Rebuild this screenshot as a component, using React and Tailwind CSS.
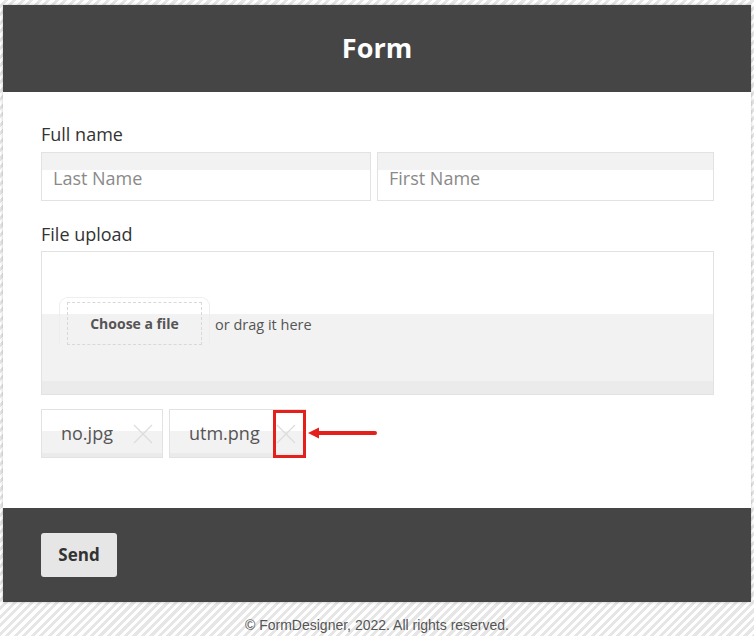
import React from "react";

const TagX = () => (
  <svg width="20" height="20" viewBox="0 0 20 20" className="shrink-0">
    <path d="M1 1 L19 19 M19 1 L1 19" stroke="#dcdcdc" strokeWidth="1.2" fill="none" />
  </svg>
);

const FileTag = ({ name, width }) => (
  <div
    className={`${width} h-[49px] flex items-center justify-between pl-[19px] pr-[9px] border border-[#e2e2e2] bg-[linear-gradient(#fff_0,#fff_21px,#f2f2f2_21px,#f2f2f2_43px,#ebebeb_43px)]`}
  >
    <span className="text-[18px] text-[#555]">{name}</span>
    <TagX />
  </div>
);

const App = () => {
  return (
    <div className="min-h-[636px] bg-[repeating-linear-gradient(135deg,#fff_0,#fff_3px,#e6e6e6_3px,#e6e6e6_6px)] pt-[5px] px-[3px] font-['Open_Sans',sans-serif]">
      <div className="bg-white shadow-[0_0_3px_rgba(0,0,0,0.25)]">
        <div className="h-[87px] bg-[#454545] flex items-center justify-center">
          <h1 className="text-[27px] font-bold text-white">Form</h1>
        </div>

        <div className="px-[38px] pt-[30px] pb-[50px]">
          <p className="text-[18px] leading-[24px] text-[#333]">Full name</p>
          <div className="mt-[6px] grid grid-cols-[330px_1fr] gap-[6px] mr-[-1px]">
            <input
              type="text"
              placeholder="Last Name"
              className="h-[49px] px-[11px] pt-[3px] border border-[#e2e2e2] text-[18px] text-[#555] placeholder:text-[#8a8a8a] outline-none bg-[linear-gradient(#f2f2f2_0,#f2f2f2_17px,#fff_17px)]"
            />
            <input
              type="text"
              placeholder="First Name"
              className="h-[49px] px-[11px] pt-[3px] border border-[#e2e2e2] text-[18px] text-[#555] placeholder:text-[#8a8a8a] outline-none bg-[linear-gradient(#f2f2f2_0,#f2f2f2_17px,#fff_17px)]"
            />
          </div>

          <p className="mt-[21px] text-[18px] leading-[24px] text-[#333]">File upload</p>
          <div className="mt-[5px] h-[144px] mr-[-1px] border border-[#e2e2e2] bg-[linear-gradient(#fff_0,#fff_62px,#f2f2f2_62px,#f2f2f2_129px,#ebebeb_129px)] pt-[45px] pl-[17px] flex items-start">
            <div className="w-[151px] pt-[4px] px-[7px] rounded-t-[9px] bg-[linear-gradient(#fff_0,#fff_16px,transparent_16px)] border-t border-x border-[#eeeeee]">
              <div className="h-[43px] border border-dashed border-[#d8d8d8] flex items-center justify-center">
                <span className="text-[14px] font-bold text-[#555]">Choose a file</span>
              </div>
            </div>
            <span className="ml-[5px] mt-[17px] text-[14.5px] text-[#555]">or drag it here</span>
          </div>

          <div className="mt-[14px] flex gap-[6px] relative">
            <FileTag name="no.jpg" width="w-[122px]" />
            <FileTag name="utm.png" width="w-[137px]" />
            <div className="absolute left-[232px] top-[1px] w-[33px] h-[48px] border-[3px] border-[#e3201b]" />
            <svg
              className="absolute left-[266px] top-[17px]"
              width="72"
              height="14"
              viewBox="0 0 72 14"
            >
              <path d="M10 7 L68 7" stroke="#e3201b" strokeWidth="4" strokeLinecap="round" />
              <path d="M1 7 L12 1.5 L12 12.5 Z" fill="#e3201b" />
            </svg>
          </div>
        </div>

        <div className="h-[94px] bg-[#454545] pt-[25px] px-[38px]">
          <button className="w-[76px] h-[44px] rounded-[3px] bg-[#e6e6e6] text-[17px] font-bold text-[#333]">
            Send
          </button>
        </div>
      </div>

      <p className="pt-[13px] text-center text-[14px] text-[#555] font-['Liberation_Sans',Arial,sans-serif]">
        © FormDesigner, 2022. All rights reserved.
      </p>
    </div>
  );
};

export default App;
